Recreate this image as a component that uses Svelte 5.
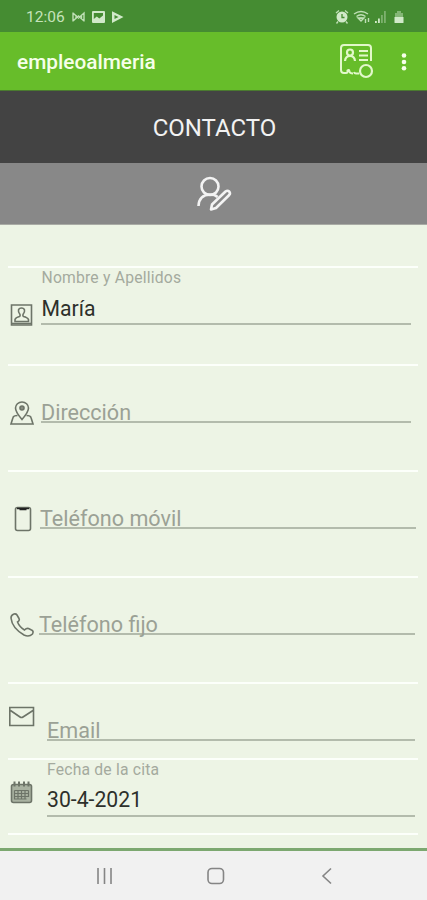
<script lang="ts">
	type Field = {
		id: string;
		label: string;
		value?: string;
	};

	const fields: Field[] = [
		{ id: 'name', label: 'Nombre y Apellidos', value: 'María' },
		{ id: 'address', label: 'Dirección' },
		{ id: 'mobile', label: 'Teléfono móvil' },
		{ id: 'phone', label: 'Teléfono fijo' },
		{ id: 'email', label: 'Email' },
		{ id: 'date', label: 'Fecha de la cita', value: '30-4-2021' }
	];
</script>

<div class="screen">
	<div class="status">
		<span class="clock">12:06</span>
		<svg class="left" width="54" height="16" viewBox="0 0 54 16">
			<path d="M1 3.500v9M1 4l5.500 5L12 4v8.500M1 12l5.500-5L12 12M4 6v4M9.500 6v4" class="thin" />
			<path fill-rule="evenodd" d="M21 2h11q1 0 1 1v10q0 1-1 1H21q-1 0-1-1V3q0-1 1-1zm.800 2v6l3-2.500 2.500 2L31 6.500V4z" />
			<path fill-rule="evenodd" d="M40 2.200l11.500 5.900L40 14zM42.500 6v4l4-2z" />
		</svg>
		<svg class="right" width="70" height="16" viewBox="0 0 70 16">
			<path d="M1 4l3-2.500M10 1.500L13 4M3 12.500l-1.500 2M11 12.500l1.500 2" class="thin" />
			<circle cx="7" cy="8" r="5.500" />
			<path d="M7 5v3.500h2.500" class="cut" />
			<path d="M19 5q7-5 14 0M21.500 7.500q4.500-3.500 9 0M24 10q2-1.500 4 0" class="thin" />
			<path d="M26 12l-3-3h6zM30.500 10v4M33.500 9v4" class="thin" />
			<path d="M40 12h1.800v2H40zM43 9.500h1.800V14H43z" />
			<path d="M46 6h1.800v8H46zM49 2h1.800v12H49z" opacity=".4" />
			<path d="M60 4h2V2h4v2h2v4h-8z" opacity=".45" />
			<path d="M59.500 8h9v5.500q0 .500-.500.500h-8q-.500 0-.500-.500z" />
		</svg>
	</div>

	<header>
		<h1>empleoalmeria</h1>
		<svg class="card-icon" width="36" height="36" viewBox="0 0 36 36">
			<path d="M20 30.500h-3q-1.500 0-2-1.500M32 18V5q0-3-3-3H5Q2 2 2 5v22q0 3 3 3h2q2 0 1.500-2.500 1.500-1.500 2 1 .500 2 3.500 2" />
			<circle cx="11" cy="9.500" r="3" stroke-width="2.200" />
			<path d="M6 18q.500-5 5-5t5 5" stroke-width="2.200" />
			<path d="M20 8h9M20 12.500h9M20 17h9" />
			<circle cx="27" cy="28" r="6" stroke-width="2.200" />
		</svg>
		<svg class="dots" width="6" height="20" viewBox="0 0 6 20">
			<circle cx="3" cy="3.500" r="2.300" />
			<circle cx="3" cy="10" r="2.300" />
			<circle cx="3" cy="16.300" r="2.300" />
		</svg>
	</header>

	<h2>CONTACTO</h2>

	<div class="edit">
		<svg width="38" height="38" viewBox="0 0 38 38">
			<circle cx="15" cy="11.500" r="8.500" />
			<path d="M3.500 31q.500-11 11.500-11.500 5 0 7.500 2.500" />
			<path d="M17 29.500l13.500-13q2-1.500 3.700 0 1.500 1.800 0 3.500L21 33l-5 1.500z" />
		</svg>
	</div>

	<main>
		{#each fields as f (f.id)}
			<div class="row {f.id}">
				<svg class="icon" width="26" height="26" viewBox="0 0 26 26">
					{#if f.id === 'name'}
						<path d="M2.500 3h20v20h-20zM6 19.500h13.500v-2q-1-2-5-3-1-.700-.500-2 2-2.500 1.500-4.500-.500-2-3-2t-3 2q-.500 2 1.500 4.500.500 1.300-.500 2-4 1-4.500 3z" />
						<path d="M3 21.500h20" />
					{:else if f.id === 'address'}
						<path d="M13 19.500Q6.500 12 6.500 8a6.500 6 0 0 1 13 0q0 4-6.500 11.500z" />
						<path d="M8.500 15.500q-4 0-4.500 2l-2 6.500h22l-2-6.500q-.500-2-4.500-2" />
						<circle cx="13" cy="8" r="2" fill="#888d82" />
					{:else if f.id === 'mobile'}
						<rect x="6.500" y="1.500" width="15" height="23" rx="2" />
						<path d="M8 2.500h12M10.500 3.500h7" stroke="#222" stroke-width="1.600" />
					{:else if f.id === 'phone'}
						<path d="M5 2q-3 1-3 4 1 10 13 17 5 2.500 8.500-1 1.500-3-1-4l-3-1.500q-2-.500-4 1.500-5-3-7-8 2.500-1.500 1.500-3.500L8 3Q7 1.500 5 2z" />
					{:else if f.id === 'email'}
						<path d="M.800 3.500h23.700v18H.800zM1.500 6.500l9.500 6.500q1.500 1 3 0l10-6.500" />
					{:else}
						<rect x="2.500" y="4.500" width="20" height="18" rx="2" fill="#a9b2a1" />
						<path d="M5.500 1.500v5M10 1.500v5M15 1.500v5M19.500 1.500v5" stroke-width="2" />
						<path d="M5.500 10.500h14M5.500 13.500h14M5.500 16.500h14M5.500 19h12M5.500 10.500v9M9 10.500v9M12.500 10.500v9M16 10.500v9M19.500 10.500V17" stroke-width="1.200" />
					{/if}
				</svg>
				<div class="field">
					{#if f.value}
						<span class="label">{f.label}</span>
						<span class="value">{f.value}</span>
					{:else}
						<span class="hint">{f.label}</span>
					{/if}
				</div>
			</div>
		{/each}
	</main>

	<nav>
		<svg width="18" height="18" viewBox="0 0 18 18"><path d="M2 1v16M8.500 1v16M15 1v16" /></svg>
		<svg width="18" height="18" viewBox="0 0 18 18"><rect x="1" y="1.500" width="15.500" height="15" rx="4" /></svg>
		<svg width="18" height="18" viewBox="0 0 18 18"><path d="M13 1.500L5 9l8 7.500" /></svg>
	</nav>
</div>

<style>
	:global(body) {
		margin: 0;
	}
	.screen {
		display: flex;
		flex-direction: column;
		height: 900px;
		overflow: hidden;
		font-family: Roboto, sans-serif;
		background: #edf4e5;
	}
	svg {
		display: block;
		flex: none;
		fill: none;
	}
	h1,
	h2 {
		margin: 0;
	}
	.status {
		box-sizing: border-box;
		height: 32px;
		display: flex;
		align-items: center;
		padding: 2px 22px 0 26px;
		background: #458c32;
		color: #c5e3bb;
	}
	.status svg {
		fill: #d1e9c9;
	}
	.status .thin {
		fill: none;
		stroke: #bfdfb5;
		stroke-width: 1.4;
	}
	.status .cut {
		fill: none;
		stroke: #458c32;
		stroke-width: 1.3;
	}
	.clock {
		width: 46px;
		font-size: 15.5px;
	}
	.right {
		margin-left: auto;
	}
	header {
		box-sizing: border-box;
		height: 59px;
		display: flex;
		align-items: center;
		padding: 1px 20px 0 17px;
		background: #67bd2a;
		border-bottom: 1px solid #4a7a2f;
		color: #f6ffe9;
	}
	h1 {
		flex: 1;
		font-size: 20.8px;
		font-weight: 500;
	}
	.card-icon {
		margin: 0 26px 2px 0;
		stroke: #e2f8ca;
		stroke-width: 2;
	}
	.dots {
		fill: #f6ffe9;
	}
	h2 {
		height: 72px;
		line-height: 74px;
		padding-left: 2px;
		background: #434343;
		color: #f2f2f2;
		font-size: 24px;
		font-weight: 400;
		text-align: center;
	}
	.edit {
		box-sizing: border-box;
		height: 62px;
		display: flex;
		justify-content: center;
		padding-top: 12px;
		background: #888;
		border-bottom: 1px solid #a9aba5;
	}
	.edit svg {
		stroke: #f3f3f3;
		stroke-width: 2.6;
		stroke-linejoin: round;
	}
	main {
		flex: 1;
		padding: 41px 9px 0 8px;
	}
	.row {
		box-sizing: border-box;
		height: 106px;
		display: flex;
		align-items: flex-start;
		border-top: 2px solid #fcfffa;
		padding-right: 3px;
	}
	.icon {
		margin: 34px 6px 0 1px;
		stroke: #6d7468;
		stroke-width: 1.6;
	}
	.field {
		box-sizing: border-box;
		flex: 1;
		height: 57px;
		display: flex;
		flex-direction: column;
		border-bottom: 2px solid #b3bbac;
	}
	.label {
		line-height: 18px;
		padding-top: 1px;
		font-size: 15.7px;
		letter-spacing: 0.2px;
		color: #a4aa9e;
	}
	.value,
	.hint {
		margin-top: auto;
		line-height: 20px;
		white-space: nowrap;
	}
	.value {
		padding-bottom: 4px;
		font-size: 21.2px;
		color: #2d302b;
	}
	.hint {
		margin-bottom: -2px;
		font-size: 21.6px;
		color: #9ba195;
	}
	.name {
		height: 98px;
		padding-right: 7px;
	}
	.name .label,
	.name .value {
		padding-left: 0.5px;
	}
	.address {
		padding-right: 7px;
	}
	.mobile {
		padding-right: 2px;
	}
	.mobile .icon {
		margin-right: 5px;
	}
	.phone .icon {
		margin-right: 4px;
	}
	.email,
	.date {
		height: 76px;
	}
	.email .icon,
	.date .icon {
		margin-top: 20px;
		margin-right: 12px;
	}
	.date {
		height: 77px;
		border-bottom: 2px solid #fcfffa;
	}
	.date .value {
		padding-bottom: 5px;
	}
	nav {
		box-sizing: border-box;
		height: 52px;
		display: flex;
		justify-content: space-between;
		align-items: center;
		padding: 0 91px 0 96px;
		background: #f1f1f1;
		border-top: 3px solid #7ca870;
	}
	nav svg {
		stroke: #858585;
		stroke-width: 1.6;
	}
</style>
